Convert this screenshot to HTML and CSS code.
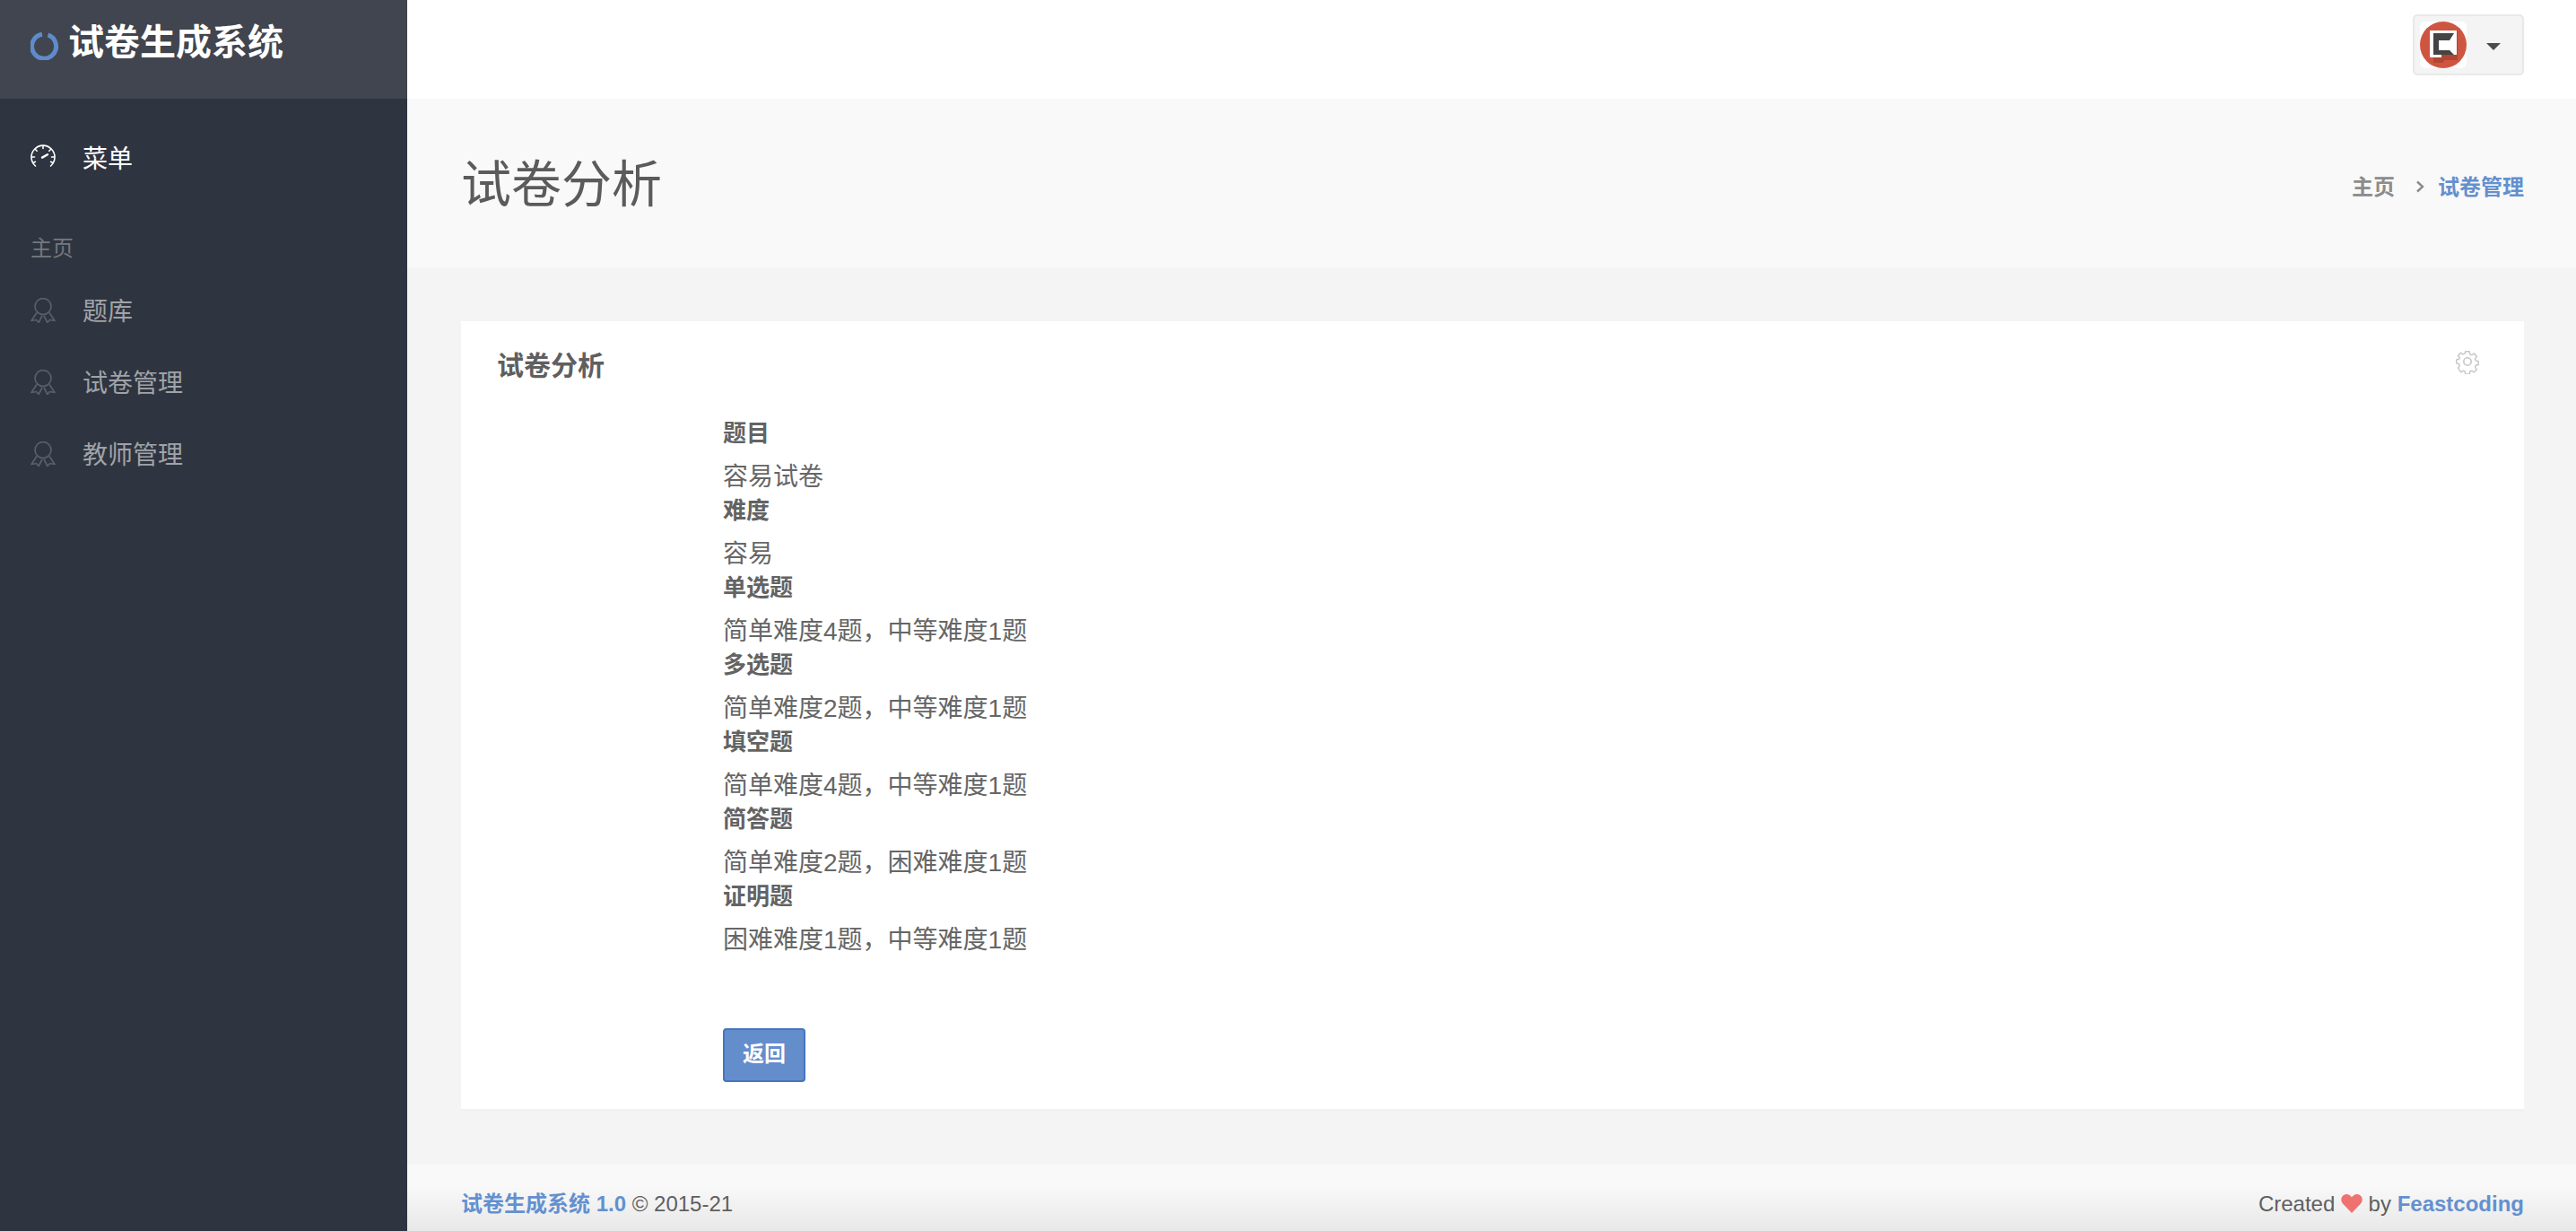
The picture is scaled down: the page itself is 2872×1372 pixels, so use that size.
FILE: index.html
```html
<!DOCTYPE html>
<html lang="zh-CN">
<head>
<meta charset="utf-8">
<title>试卷生成系统</title>
<link rel="stylesheet" href="styles.css">
</head>
<body>
<div class="app">
  <aside class="sidebar">
    <div class="brand">
      <svg class="brand-icon" viewBox="0 0 32 32"><path d="M19.500 3.900A13.500 13.500 0 1 1 13 3.300" fill="none" stroke="#5f8bcb" stroke-width="5"/></svg>
      <span class="brand-text">试卷生成系统</span>
    </div>
    <a class="nav-item nav-active">
      <svg class="nav-icon nav-icon-gauge" viewBox="0 0 28 28" fill="none" stroke="currentColor" stroke-width="1.6" stroke-linecap="round"><path d="M5.500 24A13 13 0 1 1 22.500 24"/><path d="M14 1.500v3M1.500 14h3M23.500 14h3M5.200 5.200l2 2M22.800 5.200l-2 2M3 20.500l2.400-1.200M25 20.500l-2.400-1.200"/><path d="M13 14.600l6-3.400" stroke-width="2.400"/></svg>
      <span>菜单</span>
    </a>
    <div class="nav-label">主页</div>
    <a class="nav-item">
      <svg class="nav-icon nav-icon-award" viewBox="0 0 28 28" fill="none" stroke="currentColor" stroke-width="1.7" stroke-linejoin="round"><circle cx="14" cy="9.600" r="9"/><path d="M7 16.500L1 25.500l5.500-1 2.600 3L13 20M21 16.500l6 9-5.500-1-2.600 3L15 20"/></svg>
      <span>题库</span>
    </a>
    <a class="nav-item">
      <svg class="nav-icon nav-icon-award" viewBox="0 0 28 28" fill="none" stroke="currentColor" stroke-width="1.7" stroke-linejoin="round"><circle cx="14" cy="9.600" r="9"/><path d="M7 16.500L1 25.500l5.500-1 2.600 3L13 20M21 16.500l6 9-5.500-1-2.600 3L15 20"/></svg>
      <span>试卷管理</span>
    </a>
    <a class="nav-item">
      <svg class="nav-icon nav-icon-award" viewBox="0 0 28 28" fill="none" stroke="currentColor" stroke-width="1.7" stroke-linejoin="round"><circle cx="14" cy="9.600" r="9"/><path d="M7 16.500L1 25.500l5.500-1 2.600 3L13 20M21 16.500l6 9-5.500-1-2.600 3L15 20"/></svg>
      <span>教师管理</span>
    </a>
  </aside>
  <div class="main">
    <header class="topbar">
      <button class="user-btn">
        <span class="avatar-box">
          <svg class="avatar" viewBox="0 0 52 52">
            <rect width="52" height="52" rx="6" fill="#fff"/>
            <circle cx="26" cy="26" r="26" fill="#ce5641"/>
            <path d="M15 13h27v33H27l-1 3H15z" fill="#a8412f" opacity=".75" transform="translate(0 -3)"/>
            <path d="M11 10h30v27H24v3H11z" fill="#fff"/>
            <path d="M15 13h23l-5 8H21v11h12l5 5H15z" fill="#444"/>
          </svg>
        </span>
        <span class="caret"></span>
      </button>
    </header>
    <section class="page-head">
      <h1 class="page-title">试卷分析</h1>
      <nav class="crumbs">
        <span class="crumb">主页</span>
        <svg class="crumb-sep" viewBox="0 0 10 14"><path d="M2 1.500L8 7l-6 5.500" fill="none" stroke="#8a8a8a" stroke-width="2.400"/></svg>
        <span class="crumb-current">试卷管理</span>
      </nav>
    </section>
    <main class="content">
      <div class="card">
        <div class="card-head">
          <h2 class="card-title">试卷分析</h2>
          <svg class="gear" viewBox="0 0 28 28" fill="none" stroke="#c6c6c6" stroke-width="1.6" stroke-linejoin="round"><circle cx="14" cy="14" r="4.200"/><path d="M11.600 1.600h4.800l.8 3.400 2 .9 3-1.800 3.200 3.600-1.900 2.900.6 2.200 3.400.9v4.200l-3.400.9-.6 2.200 1.900 2.900-3.200 3.200-3-1.800-2 .9-.8 3.400h-4.800l-.8-3.400-2-.9-3 1.800L2.400 22l1.900-2.900-.6-2.200-3.400-.9v-4.200l3.400-.9.6-2.200L2.400 6.700l3.200-3.600 3 1.800 2-.9z" transform="translate(1.400 1.400) scale(.9)"/></svg>
        </div>
        <div class="card-body">
          <div class="field"><div class="field-label">题目</div><div class="field-value">容易试卷</div></div>
          <div class="field"><div class="field-label">难度</div><div class="field-value">容易</div></div>
          <div class="field"><div class="field-label">单选题</div><div class="field-value">简单难度4题，中等难度1题</div></div>
          <div class="field"><div class="field-label">多选题</div><div class="field-value">简单难度2题，中等难度1题</div></div>
          <div class="field"><div class="field-label">填空题</div><div class="field-value">简单难度4题，中等难度1题</div></div>
          <div class="field"><div class="field-label">简答题</div><div class="field-value">简单难度2题，困难难度1题</div></div>
          <div class="field"><div class="field-label">证明题</div><div class="field-value">困难难度1题，中等难度1题</div></div>
          <a class="btn-primary">返回</a>
        </div>
      </div>
    </main>
    <footer class="footer">
      <div><b class="accent">试卷生成系统 1.0</b> © 2015-21</div>
      <div class="footer-right">Created
        <svg class="heart" viewBox="0 0 24 21"><path d="M12 21L2 10.500C-.8 7.300.1 2.600 3 1 6-.8 10 .2 12 3.600 14 .2 18-.8 21 1c2.900 1.600 3.800 6.300 1 9.500z" fill="#ef7270"/></svg>
        by <b class="accent">Feastcoding</b></div>
    </footer>
  </div>
</div>
</body>
</html>
```

FILE: styles.css
```css
* { box-sizing: border-box; }
html, body { margin: 0; height: 100%; }
body {
  font-family: "Liberation Sans", "Noto Sans CJK SC", sans-serif;
  font-size: 28px;
  color: #676a6c;
  background: #f4f4f4;
}
.app { display: flex; height: 100vh; overflow: hidden; }

.sidebar { width: 454px; flex: none; background: #2f3540; display: flex; flex-direction: column; }
.brand {
  height: 110px;
  background: #41454f;
  display: flex;
  align-items: center;
  padding: 0 0 0 34px;
  gap: 10px;
}
.brand-icon { width: 32px; height: 32px; margin-top: -9px; }
.brand-text { color: #fff; font-size: 40px; font-weight: 700; line-height: 1; margin-top: -16px; }

.nav-item {
  display: flex;
  align-items: center;
  height: 80px;
  padding-left: 34px;
  color: #a0a3a8;
  gap: 30px;
}
.nav-item span { line-height: 40px; }
.nav-active { color: #fff; margin-top: 28px; }
.nav-icon { width: 28px; height: 28px; flex: none; }
.nav-icon-gauge { margin-top: -6px; }
.nav-icon-award { color: #5a5f69; margin-top: -4px; }
.nav-label { color: #74787f; font-size: 24px; margin-top: 39px; line-height: 40px; padding-left: 34px; margin-bottom: 11px; }

.main { flex: 1; min-width: 0; display: flex; flex-direction: column; }
.topbar { height: 110px; flex: none; background: #fff; display: flex; justify-content: flex-end; align-items: flex-start; padding: 16px 58px 0 0; }
.user-btn {
  width: 124px; height: 68px;
  border: 2px solid #e8e8e8;
  border-radius: 5px;
  background: #f4f4f4;
  padding: 6px 0 0 6px;
  display: flex;
  align-items: flex-start;
}
.avatar-box { display: block; width: 52px; height: 52px; }
.avatar { display: block; width: 52px; height: 52px; }
.caret {
  margin: 24px 0 0 22px;
  border-left: 8px solid transparent;
  border-right: 8px solid transparent;
  border-top: 8px solid #4b4b4b;
}

.page-head {
  height: 188px;
  flex: none;
  background: #f9f9f9;
  display: flex;
  justify-content: space-between;
  align-items: center;
  padding: 0 58px 0 60px;
}
.page-title { margin: 4px 0 0; font-size: 56px; font-weight: 400; color: #5b5b5b; line-height: 1; }
.crumbs { display: flex; align-items: center; font-size: 24px; margin-top: 4px; }
.crumb { color: #8c8c8c; font-weight: 700; }
.crumb-sep { width: 10px; height: 14px; margin: 4px 15px 0 23px; }
.crumb-current { color: #6490cf; font-weight: 700; }

.content { flex: 1; padding: 60px 58px 0 60px; min-height: 0; }
.card { background: #fff; height: 878px; display: flex; flex-direction: column; box-shadow: 0 3px 0 #f1f1f1; }
.card-head { height: 107px; flex: none; display: flex; justify-content: space-between; padding: 27px 49px 0 40px; }
.card-title { margin: 0; font-size: 30px; font-weight: 700; color: #5f5f5f; line-height: 46px; }
.gear { width: 28px; height: 28px; margin-top: 4px; }
.card-body { padding-left: 292px; display: flex; flex-direction: column; align-items: flex-start; }
.field-label { font-size: 26px; font-weight: 700; color: #636363; line-height: 37px; margin-bottom: 10px; }
.field-value { font-size: 28px; color: #666; line-height: 39px; }
.btn-primary {
  display: block;
  margin-top: 79px;
  width: 92px;
  height: 60px;
  border: 2px solid #4575be;
  border-radius: 4px;
  background: #648dcc;
  color: #fff;
  font-size: 24px;
  font-weight: 700;
  line-height: 54px;
  text-align: center;
}

.footer {
  height: 74px;
  flex: none;
  display: flex;
  justify-content: space-between;
  align-items: flex-end;
  padding: 0 58px 13px 60px;
  font-size: 24px;
  line-height: 34px;
  color: #5f5f5f;
  background: linear-gradient(#f9f9f9 0, #f9f9f9 30%, #e8e8e8 100%);
}
.accent { color: #6490cf; font-weight: 700; }
.heart { width: 24px; height: 21px; vertical-align: -2px; }
```
